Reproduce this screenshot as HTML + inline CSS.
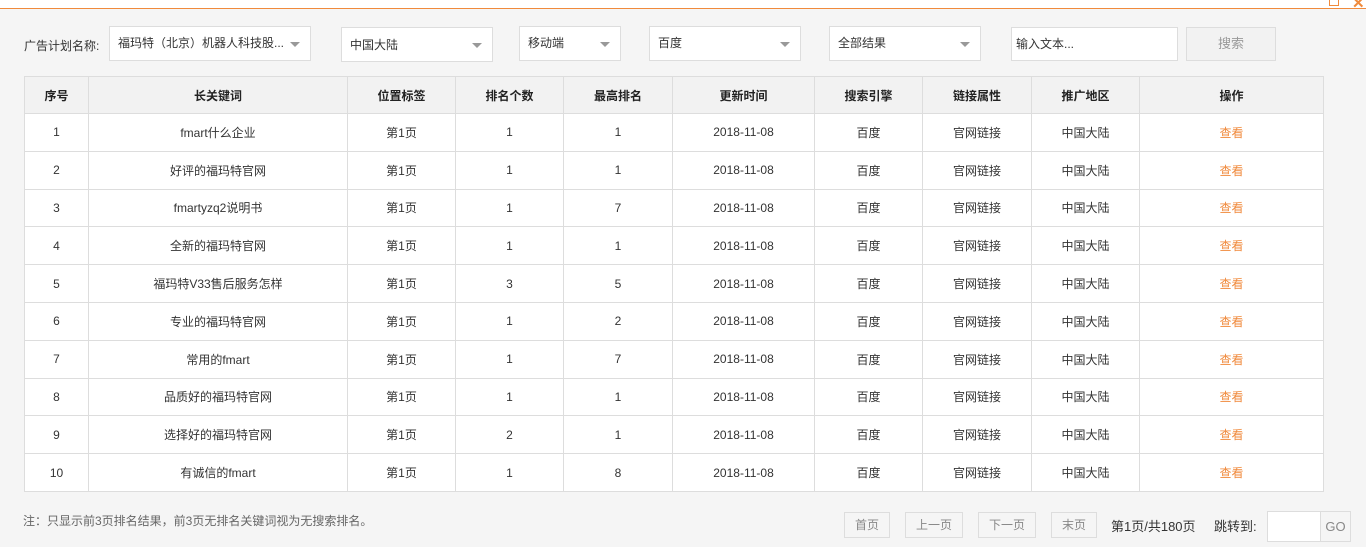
<!DOCTYPE html>
<html><head><meta charset="utf-8"><style>
*{margin:0;padding:0;box-sizing:border-box}
body{width:1366px;height:547px;overflow:hidden;background:#f5f5f5;font-family:"Liberation Sans","Noto Sans CJK SC",sans-serif;font-size:12px;color:#333;position:relative}
.top{position:absolute;left:0;top:0;width:1366px;height:8px;background:#fff}
.line{position:absolute;left:0;top:8px;width:1366px;height:1px;background:#f08a3c}
.abs{position:absolute}
.sel{position:absolute;background:#fff;border:1px solid #ddd;height:35px;line-height:33px;padding-left:8px;font-size:12px;color:#333}
.sel:after{content:"";position:absolute;right:10px;top:15px;border-left:5px solid transparent;border-right:5px solid transparent;border-top:5px solid #999}
table{position:absolute;left:24px;top:76px;border-collapse:collapse;table-layout:fixed;width:1299px;background:#fff}
td,th{border:1px solid #ddd;text-align:center;font-size:12px;color:#333;font-weight:normal;padding:0}
th{background:#f2f2f2;font-weight:bold;color:#222;height:37px}
td{height:37.8px}
.o{color:#f08a3c}
.pb{position:absolute;top:512px;height:26px;line-height:24px;border:1px solid #ddd;background:#f5f5f5;color:#888;text-align:center;font-size:12px}
</style></head><body>
<div class="top"></div>
<div class="line"></div>
<div class="abs" style="left:1329px;top:-2px;width:10px;height:8px;border:1px solid #f08a3c;border-top:none"></div>
<div class="abs" style="left:1352px;top:-6px;color:#f08a3c;font-size:15px;font-weight:bold">✕</div>

<div class="abs" style="left:24px;top:37px;font-size:12px;color:#333">广告计划名称:</div>
<div class="sel" style="left:109px;top:26px;width:202px">福玛特（北京）机器人科技股...</div>
<div class="sel" style="left:341px;top:27px;width:152px;line-height:35px">中国大陆</div>
<div class="sel" style="left:519px;top:26px;width:102px">移动端</div>
<div class="sel" style="left:649px;top:26px;width:152px">百度</div>
<div class="sel" style="left:829px;top:26px;width:152px">全部结果</div>
<div class="abs" style="left:1011px;top:27px;width:167px;height:34px;background:#fff;border:1px solid #ddd;line-height:32px;padding-left:4px;color:#333">输入文本...</div>
<div class="abs" style="left:1186px;top:27px;width:90px;height:34px;background:#f2f2f2;border:1px solid #ddd;line-height:32px;text-align:center;color:#999;font-size:13px">搜索</div>

<table>
<colgroup><col style="width:64px"><col style="width:259px"><col style="width:108px"><col style="width:108px"><col style="width:109px"><col style="width:142px"><col style="width:108px"><col style="width:109px"><col style="width:108px"><col style="width:184px"></colgroup>
<tr><th>序号</th><th>长关键词</th><th>位置标签</th><th>排名个数</th><th>最高排名</th><th>更新时间</th><th>搜索引擎</th><th>链接属性</th><th>推广地区</th><th>操作</th></tr>
<tr><td>1</td><td>fmart什么企业</td><td>第1页</td><td>1</td><td>1</td><td>2018-11-08</td><td>百度</td><td>官网链接</td><td>中国大陆</td><td class="o">查看</td></tr>
<tr><td>2</td><td>好评的福玛特官网</td><td>第1页</td><td>1</td><td>1</td><td>2018-11-08</td><td>百度</td><td>官网链接</td><td>中国大陆</td><td class="o">查看</td></tr>
<tr><td>3</td><td>fmartyzq2说明书</td><td>第1页</td><td>1</td><td>7</td><td>2018-11-08</td><td>百度</td><td>官网链接</td><td>中国大陆</td><td class="o">查看</td></tr>
<tr><td>4</td><td>全新的福玛特官网</td><td>第1页</td><td>1</td><td>1</td><td>2018-11-08</td><td>百度</td><td>官网链接</td><td>中国大陆</td><td class="o">查看</td></tr>
<tr><td>5</td><td>福玛特V33售后服务怎样</td><td>第1页</td><td>3</td><td>5</td><td>2018-11-08</td><td>百度</td><td>官网链接</td><td>中国大陆</td><td class="o">查看</td></tr>
<tr><td>6</td><td>专业的福玛特官网</td><td>第1页</td><td>1</td><td>2</td><td>2018-11-08</td><td>百度</td><td>官网链接</td><td>中国大陆</td><td class="o">查看</td></tr>
<tr><td>7</td><td>常用的fmart</td><td>第1页</td><td>1</td><td>7</td><td>2018-11-08</td><td>百度</td><td>官网链接</td><td>中国大陆</td><td class="o">查看</td></tr>
<tr><td>8</td><td>品质好的福玛特官网</td><td>第1页</td><td>1</td><td>1</td><td>2018-11-08</td><td>百度</td><td>官网链接</td><td>中国大陆</td><td class="o">查看</td></tr>
<tr><td>9</td><td>选择好的福玛特官网</td><td>第1页</td><td>2</td><td>1</td><td>2018-11-08</td><td>百度</td><td>官网链接</td><td>中国大陆</td><td class="o">查看</td></tr>
<tr><td>10</td><td>有诚信的fmart</td><td>第1页</td><td>1</td><td>8</td><td>2018-11-08</td><td>百度</td><td>官网链接</td><td>中国大陆</td><td class="o">查看</td></tr>
</table>

<div class="abs" style="left:23px;top:512px;color:#666;font-size:12px">注：只显示前3页排名结果，前3页无排名关键词视为无搜索排名。</div>
<div class="pb" style="left:844px;width:46px">首页</div>
<div class="pb" style="left:905px;width:58px">上一页</div>
<div class="pb" style="left:978px;width:58px">下一页</div>
<div class="pb" style="left:1051px;width:46px">末页</div>
<div class="abs" style="left:1111px;top:516px;color:#333;font-size:13px">第1页/共180页</div>
<div class="abs" style="left:1214px;top:516px;color:#333;font-size:13px">跳转到:</div>
<div class="abs" style="left:1267px;top:511px;width:54px;height:31px;background:#fff;border:1px solid #ddd"></div>
<div class="abs" style="left:1320px;top:511px;width:31px;height:31px;background:#f5f5f5;border:1px solid #ddd;line-height:29px;text-align:center;color:#888;font-size:13px">GO</div>
</body></html>
